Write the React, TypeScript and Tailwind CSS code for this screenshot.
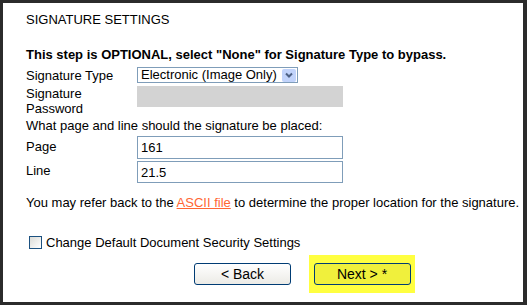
export default function App() {
  return (
    <div className="w-[527px] h-[305px] bg-[#2b2b2b] pt-[3px] pl-[3px] pr-[4px] pb-[3px] font-['Liberation_Sans',Arial,sans-serif] text-[13px] leading-[15px] text-black">
      <div className="h-full bg-white pl-[23px] pt-[9px]">
        <div>SIGNATURE SETTINGS</div>

        <div className="mt-[20px] font-bold">This step is OPTIONAL, select "None" for Signature Type to bypass.</div>

        <div className="mt-[5px] flex items-start">
          <div className="w-[111px] pt-[1px]">Signature Type</div>
          <div className="flex h-[16px] w-[161px] items-center border border-[#7f9db9] bg-white">
            <span className="flex-1 pl-[3px] leading-[14px]">Electronic (Image Only)</span>
            <span className="m-[1px] flex h-[13px] w-[14px] items-center justify-center rounded-[2px] bg-[#c1d3fb]">
              <svg width="8" height="6" viewBox="0 0 8 6">
                <path d="M1 1.5 L4 4.5 L7 1.5" fill="none" stroke="#4d6185" strokeWidth="2" />
              </svg>
            </span>
          </div>
        </div>

        <div className="mt-[3px] flex items-start">
          <div className="w-[111px]">
            Signature
            <br />
            Password
          </div>
          <div className="h-[21px] w-[206px] bg-[#d3d3d3]" />
        </div>

        <div className="mt-[2px]">What page and line should the signature be placed:</div>

        <div className="mt-[3px] flex items-start">
          <div className="w-[111px] pt-[3px]">Page</div>
          <div className="flex h-[23px] w-[206px] items-center border border-[#7f9db9] pl-[3px]">161</div>
        </div>
        <div className="mt-[2px] flex items-start">
          <div className="w-[111px] pt-[2px]">Line</div>
          <div className="flex h-[22px] w-[206px] items-center border border-[#7f9db9] pl-[3px]">21.5</div>
        </div>

        <div className="mt-[12px]">
          You may refer back to the <span className="text-[#ff6633] underline">ASCII file</span> to determine the proper location for the signature.
        </div>

        <div className="mt-[25px] flex items-center">
          <span className="ml-[3px] mr-[4px] h-[13px] w-[13px] border border-[#1c5180] bg-gradient-to-br from-[#dcdcd7] to-[#ffffff]" />
          <span>Change Default Document Security Settings</span>
        </div>

        <div className="mt-[5px] flex items-center">
          <div className="ml-[168px] flex h-[22px] w-[97px] items-center justify-center rounded-[3px] border border-[#003c74] bg-gradient-to-b from-[#ffffff] to-[#ecebe6] text-[14px]">
            &lt; Back
          </div>
          <div className="ml-[18px] flex h-[38px] w-[106px] items-center justify-center bg-[#ffff40]">
            <div className="flex h-[22px] w-[97px] items-center justify-center rounded-[3px] border border-[#003c74] bg-[#f0f03c] text-[14px]">
              Next &gt; *
            </div>
          </div>
        </div>
      </div>
    </div>
  )
}
